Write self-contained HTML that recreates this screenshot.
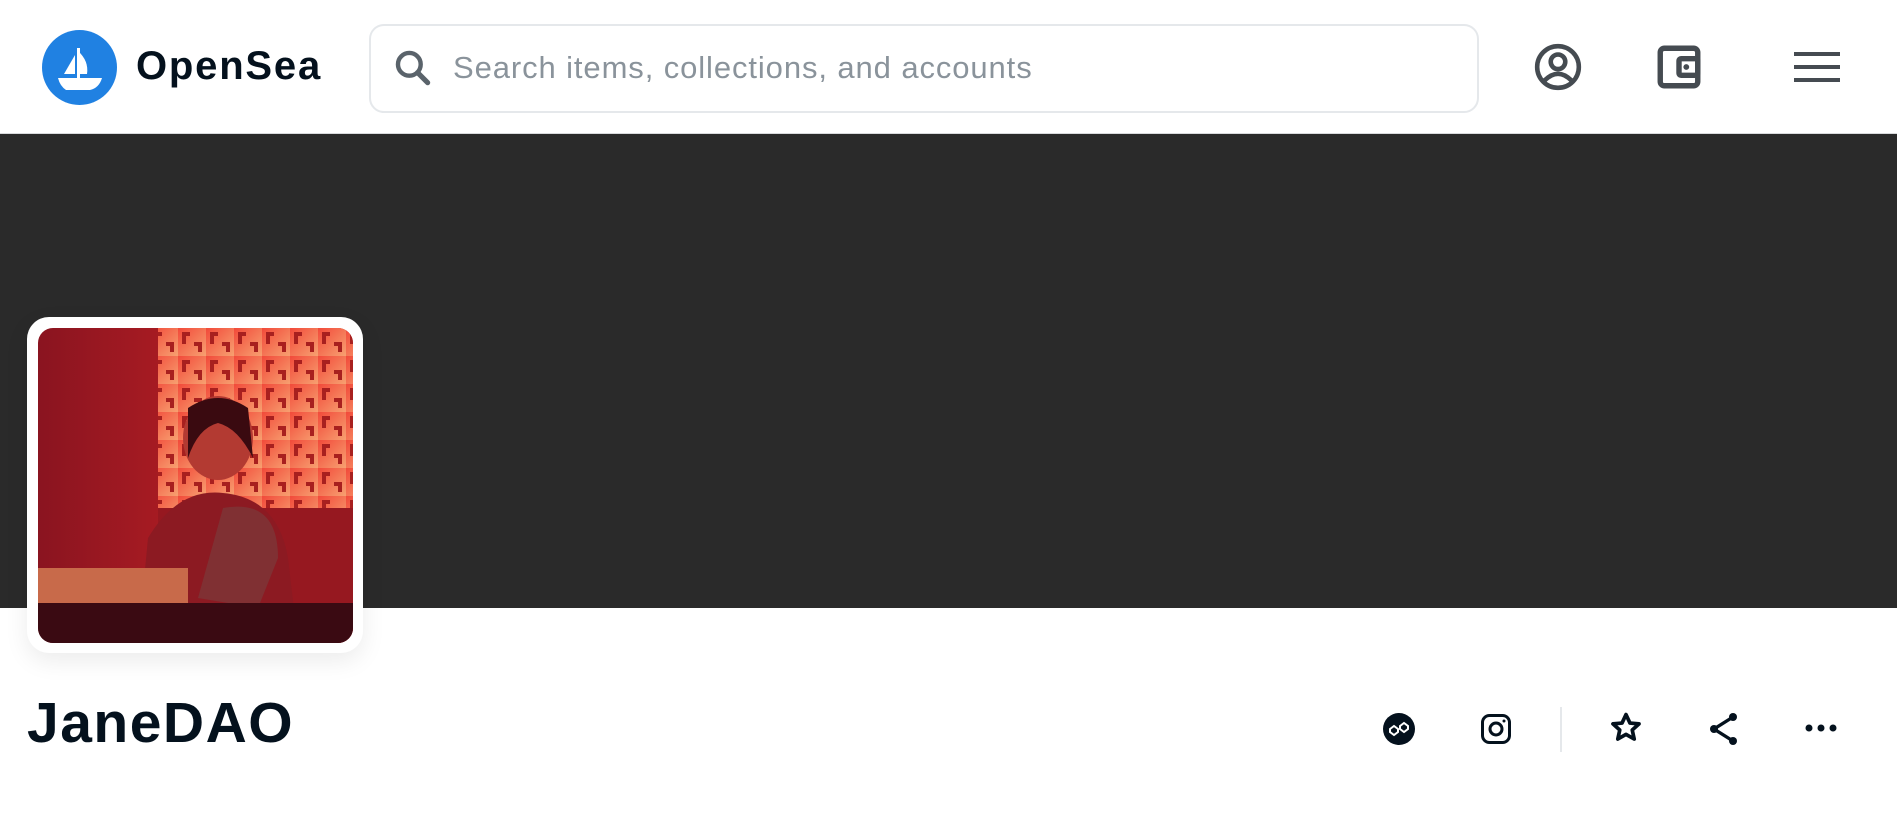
<!DOCTYPE html>
<html><head><meta charset="utf-8"><style>
*{margin:0;padding:0;box-sizing:border-box}
body{width:1897px;height:816px;overflow:hidden;background:#fff;font-family:"Liberation Sans",sans-serif;position:relative}
.nav{position:absolute;left:0;top:0;width:1897px;height:134px;border-bottom:1px solid #d8dadc;background:#fff}
.logo{position:absolute;left:42px;top:30px;width:75px;height:75px;border-radius:50%;background:#2081e2}
.brand{position:absolute;left:136px;top:44px;font-size:40px;font-weight:700;color:#04111d;letter-spacing:1.8px}
.search{position:absolute;left:369px;top:24px;width:1110px;height:89px;border:2px solid #e5e8eb;border-radius:15px}
.ph{position:absolute;left:82px;top:24px;font-size:31px;color:#8a939b;letter-spacing:0.9px}
.banner{position:absolute;left:0;top:134px;width:1897px;height:474px;background:#2a2a2a}
.av{position:absolute;left:27px;top:317px;width:336px;height:336px;background:#fff;border-radius:22px;box-shadow:0 8px 24px rgba(0,0,0,0.08)}
.avi{position:absolute;left:11px;top:11px;width:315px;height:315px;border-radius:15px;overflow:hidden}
.name{position:absolute;left:27px;top:690px;font-size:57px;font-weight:700;color:#04111d;letter-spacing:1.5px}
.div{position:absolute;left:1560px;top:707px;width:2px;height:45px;background:#e5e8eb}
svg.ic{position:absolute}
</style></head><body>
<div class="nav">
 <div class="logo"><svg width="75" height="75" viewBox="0 0 75 75"><path d="M22 44 L33 25 L33 44 Z" fill="#fff"/><path d="M36 21 Q47 31 45 44 L36 44 Z" fill="#fff"/><rect x="35" y="18" width="3" height="30" fill="#fff"/><path d="M16 48 L60 48 Q57 58 48 60 L24 60 Q18 56 16 48 Z" fill="#fff"/></svg></div>
 <div class="brand">OpenSea</div>
 <div class="search">
  <svg class="ic" style="left:20px;top:20px" width="44" height="44" viewBox="0 0 24 24"><circle cx="10" cy="10" r="6.2" fill="none" stroke="#5a636b" stroke-width="2.4"/><path d="M14.5 14.5 L20 20" stroke="#5a636b" stroke-width="2.8" stroke-linecap="round"/></svg>
  <div class="ph">Search items, collections, and accounts</div>
 </div>
 <svg class="ic" style="left:1533px;top:42px" width="50" height="50" viewBox="0 0 24 24"><circle cx="12" cy="12" r="10" fill="none" stroke="#454b51" stroke-width="2.2"/><circle cx="12" cy="9.5" r="3.5" fill="none" stroke="#454b51" stroke-width="2.2"/><path d="M5.5 18.5 Q12 12 18.5 18.5" fill="none" stroke="#454b51" stroke-width="2.2"/></svg>
 <svg class="ic" style="left:1654px;top:42px" width="50" height="50" viewBox="0 0 24 24"><rect x="3" y="3" width="18" height="18" rx="2" fill="none" stroke="#454b51" stroke-width="2.6"/><rect x="12" y="8" width="9" height="8" rx="1" fill="none" stroke="#454b51" stroke-width="2.6"/><circle cx="15.5" cy="12" r="1.4" fill="#454b51"/></svg>
 <svg class="ic" style="left:1794px;top:50px" width="46" height="34" viewBox="0 0 46 34"><rect x="0" y="2" width="46" height="4" fill="#454b51"/><rect x="0" y="15" width="46" height="4" fill="#454b51"/><rect x="0" y="28" width="46" height="4" fill="#454b51"/></svg>
</div>
<div class="banner"></div>
<div class="av"><div class="avi">
<svg width="315" height="315" viewBox="0 0 315 315">
 <defs>
  <linearGradient id="bg" x1="0" y1="0" x2="1" y2="0"><stop offset="0" stop-color="#8a1420"/><stop offset="0.35" stop-color="#a41a22"/><stop offset="1" stop-color="#c42a28"/></linearGradient>
  <linearGradient id="lat" x1="0" y1="0" x2="1" y2="1"><stop offset="0" stop-color="#f24a3a"/><stop offset="1" stop-color="#f7a070"/></linearGradient>
  <pattern id="p" width="28" height="28" patternUnits="userSpaceOnUse"><rect width="28" height="28" fill="url(#lat)"/><path d="M4 4h8v4h-4v8h-4zM16 14h8v10h-4v-6h-4z" fill="#a8201f"/></pattern>
 </defs>
 <rect width="315" height="315" fill="url(#bg)"/>
 <rect x="120" y="0" width="195" height="180" fill="url(#p)"/>
 <rect x="120" y="180" width="195" height="135" fill="#961820"/>
 <ellipse cx="180" cy="110" rx="35" ry="42" fill="#b33a32"/>
 <path d="M150 80 Q180 60 210 80 L215 130 Q200 100 180 95 Q160 100 150 130 Z" fill="#3a0a10"/>
 <path d="M100 315 L110 210 Q140 160 185 165 Q240 170 250 230 L260 315 Z" fill="#8c1a22"/>
 <path d="M185 180 Q240 170 240 230 L220 280 L160 270 Z" fill="#7a3a3a" opacity="0.7"/>
 <rect x="0" y="240" width="150" height="35" fill="#c86a4a"/>
 <rect x="0" y="275" width="315" height="40" fill="#3a0a12"/>
</svg></div></div>
<div class="name">JaneDAO</div>
<svg class="ic" style="left:1383px;top:713px" width="32" height="32" viewBox="0 0 32 32"><circle cx="16" cy="16" r="16" fill="#04111d"/><path d="M7 16 l4-3 4 3v3l-4 3-4-3z M17 13 l4-3 4 3v3l-4 3-4-3z" fill="none" stroke="#fff" stroke-width="2"/></svg>
<svg class="ic" style="left:1481px;top:714px" width="30" height="30" viewBox="0 0 30 30"><rect x="1.5" y="1.5" width="27" height="27" rx="7" fill="none" stroke="#04111d" stroke-width="3"/><circle cx="15" cy="15" r="6" fill="none" stroke="#04111d" stroke-width="3"/><circle cx="23" cy="7" r="1.5" fill="#04111d"/></svg>
<div class="div"></div>
<svg class="ic" style="left:1609px;top:711px" width="34" height="34" viewBox="0 0 24 24"><path d="M12 2.5l2.8 6 6.4.6-4.8 4.3 1.4 6.4L12 16.5l-5.8 3.3 1.4-6.4L2.8 9.1l6.4-.6z" fill="none" stroke="#04111d" stroke-width="2.6" stroke-linejoin="round"/></svg>
<svg class="ic" style="left:1708px;top:712px" width="32" height="34" viewBox="0 0 32 34"><circle cx="25" cy="5" r="4" fill="#04111d"/><circle cx="6" cy="17" r="4" fill="#04111d"/><circle cx="25" cy="29" r="4" fill="#04111d"/><path d="M25 5L6 17L25 29" fill="none" stroke="#04111d" stroke-width="3.4"/></svg>
<svg class="ic" style="left:1805px;top:722px" width="32" height="12" viewBox="0 0 32 12"><circle cx="4" cy="6" r="3.5" fill="#04111d"/><circle cx="16" cy="6" r="3.5" fill="#04111d"/><circle cx="28" cy="6" r="3.5" fill="#04111d"/></svg>
</body></html>
